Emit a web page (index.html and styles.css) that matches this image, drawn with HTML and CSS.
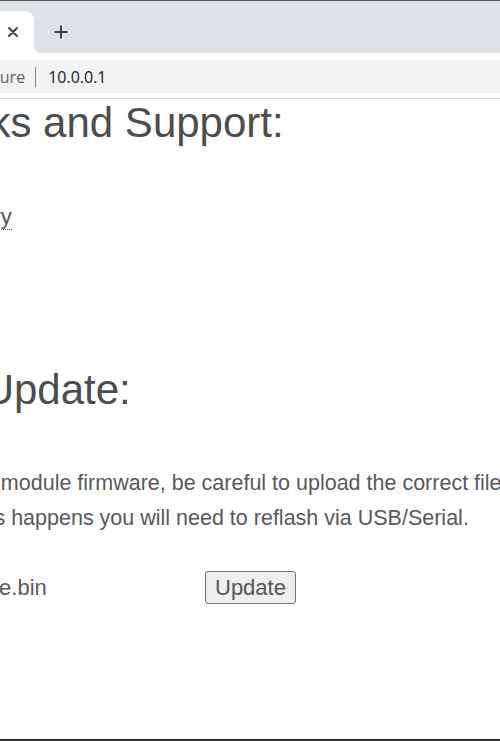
FILE: index.html
```html
<!DOCTYPE html>
<html lang="en">
<head>
  <meta charset="UTF-8" />
  <meta name="viewport" content="width=device-width, initial-scale=1" />
  <title>Module Settings</title>
  <link rel="stylesheet" href="styles.css">
</head>
<body>

  <div class="window-edge"></div>

  <header class="tabbar">
    <div class="tab">
      <svg class="tab-close" width="10" height="10" viewBox="0 0 10 10" aria-hidden="true">
        <path d="M1 1 L9 9 M9 1 L1 9" stroke="#3c4043" stroke-width="1.8" stroke-linecap="round" />
      </svg>
    </div>
    <div class="new-tab">
      <svg width="16" height="16" viewBox="0 0 16 16" aria-hidden="true">
        <path d="M8 1.5 V14.5 M1.5 8 H14.5" stroke="#3c4043" stroke-width="2" />
      </svg>
    </div>
  </header>

  <div class="toolbar">
    <div class="omnibox">
      <span class="security">Not secure</span>
      <span class="divider"></span>
      <span class="url">10.0.0.1</span>
    </div>
  </div>

  <main class="page">
    <h2 class="section-title links-title">Helpful Links and Support:</h2>
    <ul class="links">
      <li><a href="#" class="doc-link">GitHub Repository</a></li>
    </ul>

    <h2 class="section-title update-title">Firmware Update:</h2>
    <p class="note">You can upload new module firmware, be careful to upload the correct file otherwise the device can be bricked. If this happens you will need to reflash via USB/Serial.</p>

    <form class="upload-row" method="POST" enctype="multipart/form-data">
      <label class="file-pick">
        <span class="file-btn">Choose File</span>
        <span class="file-name">firmware.bin</span>
      </label>
      <button type="submit" class="update-btn">Update</button>
    </form>
  </main>

  <div class="screen-edge"></div>

</body>
</html>
```

FILE: styles.css
```css
* {
  box-sizing: border-box;
  margin: 0;
  padding: 0;
}

body {
  width: 500px;
  height: 741px;
  overflow: hidden;
  display: flex;
  flex-direction: column;
  background: #fff;
  font-family: 'Liberation Sans', Arial, sans-serif;
}

/* browser frame */
.window-edge {
  height: 1px;
  background: #505256;
}

.tabbar {
  height: 52px;
  background: #dee1e6;
  display: flex;
  align-items: flex-end;
}

.tab {
  position: relative;
  width: 34px;
  height: 42px;
  background: #fff;
  border-radius: 0 9px 0 0;
  display: flex;
  align-items: center;
  justify-content: flex-end;
  padding-right: 16px;
}

.tab::after {
  content: "";
  position: absolute;
  right: -8px;
  bottom: 0;
  width: 8px;
  height: 8px;
  background: radial-gradient(circle at 100% 0, transparent 8px, #fff 8.5px);
}

.new-tab {
  width: 54px;
  height: 42px;
  display: flex;
  align-items: center;
  justify-content: center;
}

.toolbar {
  height: 46px;
  background: #fff;
  padding: 7px 0 5px;
  border-bottom: 1px solid #d4d4d4;
}

.omnibox {
  height: 33px;
  margin-left: -56px;
  margin-right: -40px;
  background: #f1f3f4;
  border-radius: 17px;
  display: flex;
  align-items: center;
  font-family: 'Open Sans', 'Noto Sans', sans-serif;
  font-size: 16px;
}

.security {
  color: #5f6368;
}

.divider {
  width: 1px;
  height: 20px;
  background: #80868b;
  margin: 0 12px 0 10px;
}

.url {
  color: #202124;
}

/* page content */
.page {
  flex: 1;
  margin-left: -206px;
  color: #555;
}

.section-title {
  font-size: 42px;
  font-weight: 400;
  line-height: 48px;
  color: #4d4d4d;
  white-space: nowrap;
}

.links-title {
  margin-left: -3px;
}

.update-title {
  margin: 134px 0 0 3px;
}

.links {
  list-style: none;
  padding-left: 38px;
  margin-top: 55px;
  font-size: 22px;
  line-height: 30px;
}

.doc-link {
  color: #555;
  text-decoration: none;
  border-bottom: 1px dotted #555;
}

.note {
  margin: 52px 0 0 8px;
  width: 42.3em;
  font-size: 21.5px;
  line-height: 35px;
  color: #5a5a5a;
}

.upload-row {
  margin-top: 35px;
  display: flex;
  align-items: baseline;
  font-size: 22px;
  color: #5a5a5a;
}

.file-pick {
  flex: 0 0 407px;
  display: flex;
  align-items: baseline;
  gap: 10px;
}

.file-btn {
  width: 123px;
}

.update-btn {
  margin-left: 4px;
  font-family: inherit;
  font-size: 22px;
  line-height: 25px;
  padding: 3px 9px;
  color: #555;
  background: #efefef;
  border: 1px solid #767676;
  border-radius: 3px;
  cursor: pointer;
}

.screen-edge {
  height: 2px;
  background: #2b2b2b;
}
```
